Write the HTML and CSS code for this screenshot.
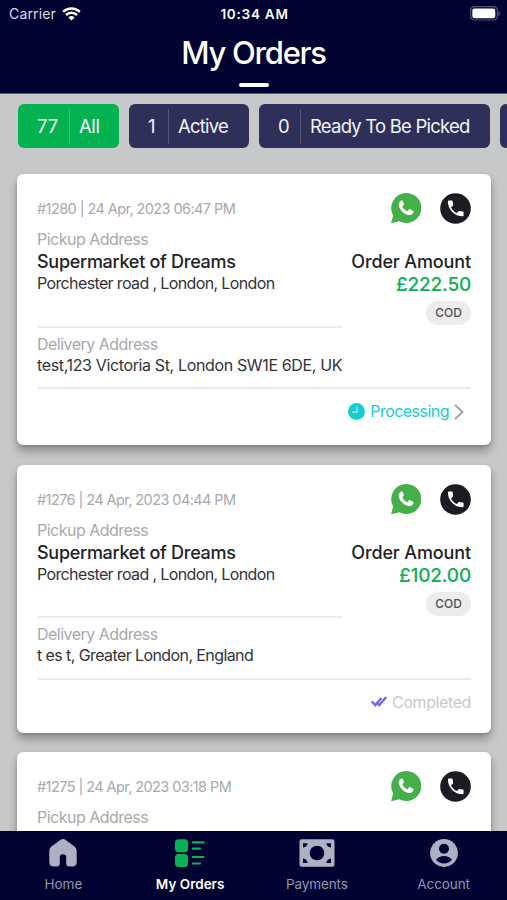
FILE: index.html
```html
<!DOCTYPE html>
<html lang="en">
<head>
<meta charset="utf-8">
<title>My Orders</title>
<link rel="stylesheet" href="styles.css">
</head>
<body>
<svg class="defs" width="0" height="0" aria-hidden="true">
  <symbol id="chat" viewBox="0 0 30.500 30.500">
    <path fill="#43b04a" d="M15.400 0A15 15 0 1 1 8.200 28.200L0 30.300 2.200 22.400A15 15 0 0 1 15.400 0Z"/>
    <path fill="#fff" transform="translate(6.800 6.600)" d="M3.900.7 2.600 1.300C.9 2.800.4 4.800 1.100 6.800c1.500 4 4.500 6.900 8.400 8.300 2 .7 4.100.3 5.400-1.200.7-.8 1-1.700.8-2.600L12 9.300l-.8.3-1.300 1.700c-.3.3-.6.3-1 .1-1.800-.9-3.200-2.200-4.100-4-.2-.4-.2-.7.1-1L6.100 5l.1-.7L4.800 1.100Z"/>
  </symbol>
  <symbol id="call" viewBox="0 0 31 31">
    <circle cx="15.500" cy="15.500" r="15.300" fill="#1c1b24"/>
    <path fill="#fff" transform="translate(5.300 5) scale(.87)" d="M6.620 10.790c1.440 2.830 3.760 5.140 6.590 6.590l2.200-2.200c.27-.27.67-.36 1.020-.24 1.120.37 2.330.57 3.570.57.55 0 1 .45 1 1V20c0 .55-.45 1-1 1-9.390 0-17-7.610-17-17 0-.55.45-1 1-1h3.500c.55 0 1 .45 1 1 0 1.250.2 2.450.57 3.570.11.35.03.74-.25 1.020l-2.200 2.200z"/>
  </symbol>
</svg>
<div class="app">
  <header class="top">
    <div class="status">
      <span class="carrier"><span class="carrier-name">Carrier</span>
        <svg width="19" height="14" viewBox="0 0 19 14" fill="none" stroke="#fff" stroke-width="2.500"><path d="M1.200 4.900a12 12 0 0 1 16.600 0M4 8a8 8 0 0 1 11 0"/><path fill="#fff" stroke="none" d="M9.500 13.600 6.400 10.500a4.500 4.500 0 0 1 6.200 0Z"/></svg>
      </span>
      <span class="clock">10:34 AM</span>
      <svg class="battery" width="30" height="15" viewBox="0 0 30 15"><rect x=".6" y=".6" width="26.800" height="13.400" rx="4" fill="none" stroke="#54557a" stroke-width="1.200"/><rect x="2.300" y="2.500" width="23" height="9.800" rx="2.200" fill="#fff"/><path d="M28.500 5v5q1.500-.8 1.500-2.500T28.500 5Z" fill="#54557a"/></svg>
    </div>
    <h1 class="title">My Orders</h1>
    <div class="underline"></div>
  </header>
  <main class="content">
    <nav class="chips">
      <div class="chip chip-all"><span class="count">77</span><span class="label">All</span></div>
      <div class="chip chip-active"><span class="count">1</span><span class="label">Active</span></div>
      <div class="chip chip-ready"><span class="count">0</span><span class="label">Ready To Be Picked</span></div>
      <div class="chip chip-more"></div>
    </nav>
    <article class="card">
      <div class="head"><span class="meta">#1280 | 24 Apr, 2023 06:47 PM</span><svg class="chat"><use href="#chat"/></svg><svg class="call"><use href="#call"/></svg></div>
      <div class="main">
        <div class="pickup"><div class="caption">Pickup Address</div><div class="shop">Supermarket of Dreams</div><div class="address road">Porchester road , London, London</div></div>
        <div class="amount"><div class="amount-label">Order Amount</div><div class="price">£222.50</div><div class="tag">COD</div></div>
      </div>
      <div class="delivery"><div class="caption to">Delivery Address</div><div class="address dest">test,123 Victoria St, London SW1E 6DE, UK</div></div>
      <div class="state processing">
        <svg width="17" height="17" viewBox="0 0 17 17"><circle cx="8.500" cy="8.500" r="8.400" fill="#18cdd0"/><path d="M8.900 3.500v5.600H4" fill="none" stroke="#a5f0ee" stroke-width="1.200"/></svg>
        <span class="state-text">Processing</span>
        <svg class="chevron" width="10" height="16" viewBox="0 0 10 16"><path d="m1 1 7.500 7L1 15" fill="none" stroke="#a0a0a5" stroke-width="1.800"/></svg>
      </div>
    </article>
    <article class="card card-done">
      <div class="head"><span class="meta">#1276 | 24 Apr, 2023 04:44 PM</span><svg class="chat"><use href="#chat"/></svg><svg class="call"><use href="#call"/></svg></div>
      <div class="main">
        <div class="pickup"><div class="caption">Pickup Address</div><div class="shop">Supermarket of Dreams</div><div class="address road">Porchester road , London, London</div></div>
        <div class="amount"><div class="amount-label">Order Amount</div><div class="price">£102.00</div><div class="tag">COD</div></div>
      </div>
      <div class="delivery"><div class="caption to">Delivery Address</div><div class="address dest-b">t es t, Greater London, England</div></div>
      <div class="state completed">
        <svg width="16" height="11" viewBox="0 0 16 11" fill="none" stroke="#7b68ee" stroke-width="2.400"><path d="m.8 5.300 3.500 3.900L10.500 2"/><path d="m5.500 6 2.700 3.200L15.200 1"/></svg>
        <span class="state-text">Completed</span>
      </div>
    </article>
    <article class="card card-cut">
      <div class="head"><span class="meta">#1275 | 24 Apr, 2023 03:18 PM</span><svg class="chat"><use href="#chat"/></svg><svg class="call"><use href="#call"/></svg></div>
      <div class="main"><div class="pickup"><div class="caption">Pickup Address</div></div></div>
    </article>
  </main>
  <nav class="tabs">
    <div class="tab"><svg width="28" height="28" viewBox="0 0 28 28"><path fill="#b0b0c3" d="M11 1.200 2.400 7.400Q.3 9 .3 11.800V23q0 4.600 4.600 4.600H7.500q3.300 0 3.300-3.300V18q0-2.800 3.200-2.800t3.200 2.800v6.300q0 3.300 3.300 3.300h2.600q4.600 0 4.600-4.600V11.800q0-2.800-2.100-4.400L17 1.200q-3-2.200-6 0Z"/></svg><span class="tab-text home">Home</span></div>
    <div class="tab tab-on"><svg width="30" height="28" viewBox="0 0 30 28" fill="#06b455"><rect width="13" height="13" rx="3.500" y=".2"/><rect y="15" width="13" height="13" rx="3.500"/><path d="M17.800 3.300H28.500M17.800 9.600H25M17.800 18H28.500M17.800 24.500H25" stroke="#06b455" stroke-width="2.200" stroke-linecap="round"/></svg><span class="tab-text orders">My Orders</span></div>
    <div class="tab"><svg width="36" height="28" viewBox="0 0 36 28"><rect x=".5" y=".3" width="35" height="27.400" rx="2" fill="#b0b0c3"/><g fill="#000232"><circle cx="18" cy="14" r="7.300"/><path d="M4 4.200h4.600Q8.200 8 4 8.500ZM32 4.200h-4.600Q27.800 8 32 8.500ZM4 24h4.600Q8.200 20 4 19.500ZM32 24h-4.600Q27.800 20 32 19.500Z"/></g></svg><span class="tab-text payments">Payments</span></div>
    <div class="tab"><svg width="28" height="28" viewBox="0 0 28 28"><circle cx="14" cy="14" r="13.900" fill="#b0b0c3"/><g fill="#000232"><circle cx="14" cy="9.800" r="5"/><path d="M6 20.500Q9 17 14 17t8 3.500Q19 24.500 14 24.500T6 20.500Z"/></g></svg><span class="tab-text account">Account</span></div>
  </nav>
</div>
</body>
</html>
```
FILE: styles.css
```css
* { box-sizing: border-box; }
body { margin: 0; font-family: Inter, "Liberation Sans", sans-serif; color: #222227; }
.defs { position: absolute; }
.app { width: 507px; height: 900px; display: flex; flex-direction: column; overflow: hidden; background: #c6c8ca; white-space: nowrap; }
.top { height: 94px; flex: none; background: #000232; color: #fff; display: flex; flex-direction: column; align-items: center; border-bottom: 1px solid #55567a; }
.status { width: 100%; height: 27px; padding: 0 7px 0 9px; display: grid; grid-template-columns: 1fr auto 1fr; align-items: center; font-size: 14px; }
.carrier { display: flex; align-items: center; gap: 6px; color: #dcdce6; }
.carrier-name { letter-spacing: .15px; }
.clock { font-weight: 600; font-size: 13.500px; letter-spacing: .75px; }
.battery { justify-self: end; }
.title { margin: 7px 0 0; font-size: 31px; line-height: 38px; font-weight: 500; letter-spacing: -1.250px; }
.underline { width: 30px; height: 4px; margin-top: 11px; border-radius: 2px; background: #fff; }
.content { flex: 1; min-height: 0; overflow: hidden; }
.chips { display: flex; gap: 10px; padding: 10px 0 0 18px; margin-bottom: 26px; overflow: hidden; }
.chip { flex: none; height: 44px; border-radius: 6px; background: #2e3059; color: #f4f4fa; font-size: 18.500px; display: flex; align-items: center; }
.chip-all { background: #05b250; width: 101px; }
.chip-active { width: 120px; }
.chip-ready { width: 231px; }
.chip-more { width: 60px; }
.count { height: 35px; line-height: 35px; border-right: 1px solid rgba(255,255,255,.2); padding-left: 19px; width: 52px; }
.chip-active .count { width: 40px; }
.chip-ready .count { width: 42px; }
.label { margin-left: 9px; letter-spacing: -.780px; }
.chip-all .label { letter-spacing: -.4px; }
.card { width: 474px; height: 271px; margin: 0 0 19.500px 17px; padding: 18px 20px 0; border-radius: 6px; background: #fff; box-shadow: 0 6px 10px rgba(0,0,0,.3), 0 1px 3px rgba(0,0,0,.15); overflow: hidden; }
.card-done { height: 268px; }
.head { height: 33px; display: flex; align-items: center; }
.meta { flex: 1; font-size: 14.500px; letter-spacing: -.580px; color: #a8a8ad; }
.chat { width: 30.500px; height: 30.500px; margin-right: 19px; }
.call { width: 31px; height: 31px; }
.main { display: flex; justify-content: space-between; height: 102.500px; }
.pickup { width: 305px; padding-top: 4px; border-bottom: 2px solid #ececee; }
.caption { font-size: 16px; line-height: 20px; letter-spacing: -.520px; color: #a8a8ad; }
.shop { font-size: 18px; font-weight: 500; line-height: 22px; margin-top: 2px; letter-spacing: -.290px; }
.address { font-size: 16px; line-height: 20px; color: #333338; }
.road { letter-spacing: -.630px; }
.dest { letter-spacing: -.360px; margin-top: 1px; }
.dest-b { letter-spacing: -.590px; margin-top: 1px; }
.amount { display: flex; flex-direction: column; align-items: flex-end; padding-top: 26px; }
.amount-label { font-size: 18px; line-height: 22px; font-weight: 500; letter-spacing: -.130px; }
.price { font-size: 19px; line-height: 22px; margin-top: 1px; font-weight: 500; letter-spacing: -.2px; color: #0aaf51; }
.tag { width: 45px; height: 24px; margin-top: 5px; border-radius: 12px; background: #ececed; font-size: 12px; line-height: 24px; text-align: center; color: #505055; font-weight: 500; }
.delivery { height: 61.500px; padding-top: 6px; border-bottom: 2px solid #ececee; }
.state { height: 44px; display: flex; align-items: center; justify-content: flex-end; font-size: 16px; }
.processing { color: #18cdd0; padding-right: 7px; gap: 5px; letter-spacing: -.530px; }
.chevron { position: relative; top: 1px; }
.completed { color: #c9c9cb; gap: 5px; letter-spacing: -.4px; }
.tabs { flex: none; height: 69px; background: #000232; color: #9496ad; display: grid; grid-template-columns: repeat(4, 1fr); }
.tab { display: flex; flex-direction: column; align-items: center; padding-top: 7.500px; }
.tab-text { font-size: 13.500px; line-height: 18px; margin-top: 8.500px; }
.tab-on { color: #fff; font-weight: 600; }
.account, .payments { letter-spacing: -.1px; }
```
